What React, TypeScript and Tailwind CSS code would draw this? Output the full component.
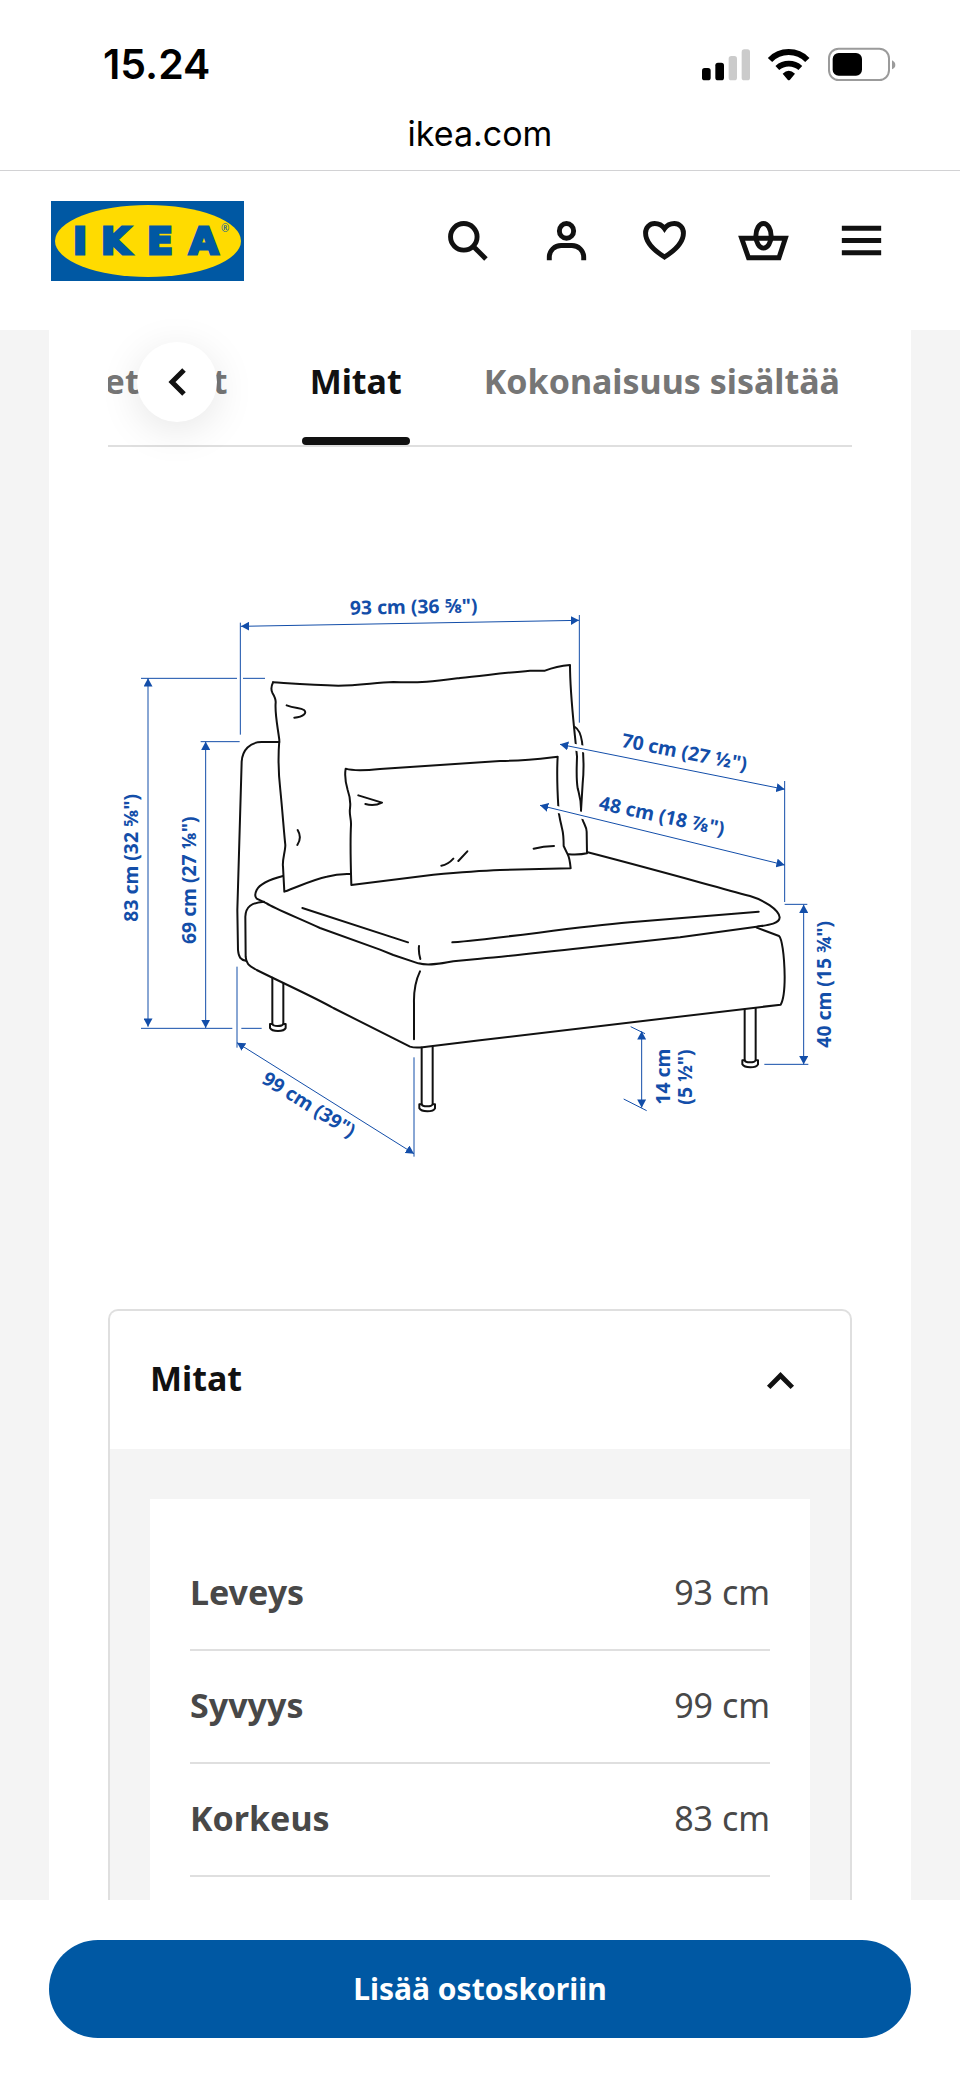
import type { ReactNode } from "react";

const dimensions = [
  { label: "Leveys", value: "93 cm" },
  { label: "Syvyys", value: "99 cm" },
  { label: "Korkeus", value: "83 cm" },
];

const tabs = [
  { label: "Tuotetiedot", active: false },
  { label: "Mitat", active: true },
  { label: "Kokonaisuus sisältää", active: false },
];

const Icon = ({ children }: { children: ReactNode }) => (
  <svg viewBox="0 0 24 24" className="block size-[59px]" fill="none" stroke="#111111" strokeWidth="2" aria-hidden="true">
    {children}
  </svg>
);

const StatusBar = () => {
  return (
    <div className="border-b border-[#d2d2d4] pt-10 pb-3 font-[Inter,sans-serif] text-black">
      <div className="flex h-12 items-center justify-between pr-16 pl-[103px]">
        <span className="text-[41px] leading-[48px] font-semibold">15.24</span>
        {/* signal, wifi and battery */}
        <svg viewBox="36 47 582 105" className="h-[35px] w-[194px]" role="img" aria-label="Signal, Wi-Fi, battery">
          <rect x="36" y="110" width="26" height="37" rx="8" />
          <rect x="76" y="94" width="26" height="53" rx="8" />
          <rect x="116" y="74" width="25" height="73" rx="8" fill="#cbcbcb" />
          <rect x="155" y="54" width="25" height="93" rx="8" fill="#cbcbcb" />
          <path d="M240 86A78 78 0 0 1 352 86" fill="none" stroke="#000" strokeWidth="18" />
          <path d="M262 110A52 52 0 0 1 331 110" fill="none" stroke="#000" strokeWidth="17" />
          <path d="M278 127Q296 110 315 127L300 145Q296 149 293 145Z" />
          <rect x="417" y="52" width="180" height="94" rx="29" fill="none" stroke="#9b9b9b" strokeWidth="6" />
          <rect x="428" y="65" width="88" height="68" rx="18" />
          <path d="M606 87Q616 92 616 101T606 114Z" fill="#9b9b9b" />
        </svg>
      </div>
      <p className="mt-[22px] text-center text-[34px] leading-[48px]">ikea.com</p>
    </div>
  );
};

const Header = () => {
  return (
    <header className="flex items-center justify-between bg-white pt-[30px] pr-[69px] pb-[49px] pl-[51px]">
      <a href="#" aria-label="IKEA">
        <svg viewBox="0 0 193 80" className="block h-20 w-[193px]">
          <rect width="193" height="80" fill="#0058a3" />
          <ellipse cx="97" cy="40" rx="93" ry="36" fill="#ffdb00" />
          <text
            x="22 50 96 138"
            y="53"
            fontSize="38"
            fontWeight="700"
            fill="#0058a3"
            stroke="#0058a3"
            strokeWidth="3"
            className="font-['DejaVu_Sans',sans-serif]"
          >
            IKEA
          </text>
          <text x="170" y="31" fontSize="10" fill="#0058a3" className="font-['Noto_Sans',sans-serif]">®</text>
        </svg>
      </a>
      <nav className="flex w-[453px] justify-between pb-0.5">
        <button type="button" aria-label="Haku">
          <Icon>
            <circle cx="10.5" cy="10.5" r="5.4" />
            <path d="M14.3 14.3l5.2 5.2" />
          </Icon>
        </button>
        <button type="button" aria-label="Profiili">
          <Icon>
            <ellipse cx="12" cy="8.1" rx="2.9" ry="3" />
            <path d="M5 20v-1.2a4.8 4.8 0 0 1 4.8-4.8h4.4a4.8 4.8 0 0 1 4.8 4.8V20" />
          </Icon>
        </button>
        <button type="button" aria-label="Suosikit">
          <Icon>
            <path d="M12 18.7C9 16.8 4.3 13 4.3 8.9 4.3 6.7 5.9 5.1 8 5.1c1.7 0 3.1.8 4 2.1.9-1.3 2.3-2.1 4-2.1 2.1 0 3.7 1.6 3.7 3.8 0 4.1-4.7 7.9-7.7 9.8z" />
          </Icon>
        </button>
        <button type="button" aria-label="Ostoskori">
          <Icon>
            <path d="M3.1 11.1h17.8L18.3 19H5.9z" />
            <ellipse cx="12" cy="10.1" rx="3.1" ry="5" />
          </Icon>
        </button>
        <button type="button" aria-label="Valikko">
          <Icon>
            <path d="M4 7h16M4 12h16M4 17h16" />
          </Icon>
        </button>
      </nav>
    </header>
  );
};

const Tabs = () => {
  return (
    <div className="relative">
      <div role="tablist" className="flex h-[117px] justify-end gap-[66px] overflow-hidden border-b-2 border-[#dfdfdf] pr-1">
        {tabs.map((tab) => (
          <button
            key={tab.label}
            type="button"
            role="tab"
            aria-selected={tab.active}
            className="flex shrink-0 flex-col justify-between pt-[29px]"
          >
            <span className={`px-2 text-[34px] leading-[44px] font-bold whitespace-nowrap ${tab.active ? "text-[#111111]" : "text-[#767676]"}`}>
              {tab.label}
            </span>
            {tab.active && <span className="h-2 w-full rounded-full bg-[#111111]"></span>}
          </button>
        ))}
      </div>
      <button
        type="button"
        aria-label="Edellinen"
        className="absolute top-3 left-[29px] flex size-20 items-center justify-center rounded-full bg-white shadow-[0_8px_40px_rgba(0,0,0,0.1)]"
      >
        <svg viewBox="0 0 18 28" className="h-7 w-[18px]" fill="none" stroke="#111111" strokeWidth="5" aria-hidden="true">
          <path d="M16 2L4 14l12 12" />
        </svg>
      </button>
    </div>
  );
};

const Leg = ({ x, left, right, bottom }: { x: number; left: number; right: number; bottom: number }) => (
  <g>
    <path d={`M${x} ${left}V${bottom}M${x + 33} ${right}V${bottom}`} />
    <path
      d={`M${x - 7} ${bottom - 1}v12q5 9 24 9t23-9v-12l-7 0q-3 6-17 6t-16-6z`}
      fill="#fff"
    />
  </g>
);

const arrowLines = [
  "M423 169L1437 151",
  "M144 325V1370",
  "M317 515V1374",
  "M411 1418L942 1751",
  "M1380 523L2054 658",
  "M1320 706L2054 885",
  "M2111 1004V1483",
  "M1625 1384V1613",
];

const measures = [
  { text: '93 cm (36 ⅝")', x: 750, y: 134, angle: -1 },
  { text: '83 cm (32 ⅝")', x: 115, y: 1055, angle: -90 },
  { text: '69 cm (27 ⅛")', x: 289, y: 1122, angle: -90 },
  { text: '99 cm (39")', x: 482, y: 1537, angle: 32 },
  { text: '70 cm (27 ½")', x: 1562, y: 530, angle: 11 },
  { text: '48 cm (18 ⅞")', x: 1494, y: 718, angle: 12 },
  { text: '40 cm (15 ¾")', x: 2192, y: 1433, angle: -90 },
  { text: "14 cm", x: 1709, y: 1604, angle: -90 },
  { text: '(5 ½")', x: 1777, y: 1604, angle: -90 },
];

const SofaDrawing = () => {
  return (
    <svg viewBox="24 -192 2232 2232" className="my-[59px] block w-full" role="img" aria-label="Mittapiirros">
      <defs>
        <marker
          id="arrow"
          viewBox="0 0 22 24"
          refX="22"
          refY="12"
          markerWidth="25"
          markerHeight="27"
          markerUnits="userSpaceOnUse"
          orient="auto-start-reverse"
        >
          <path d="M0 0L22 12L0 24Z" fill="#134ea9" />
        </marker>
      </defs>

      <g fill="none" stroke="#111111" strokeWidth="6" strokeLinecap="round" strokeLinejoin="round">
        {/* backrest frame */}
        <path d="M538 516H485C450 516 427 540 425 575L412 1020L414 1140C416 1162 422 1170 438 1172" />
        {/* big cushion */}
        <path d="M519 337C512 352 513 360 517 368C523 378 528 386 527 398C524 430 533 470 538 510C534 560 534 600 541 660C548 730 552 790 556 825C556 845 546 870 549 890L553 965C600 948 640 928 680 920C705 913 730 911 752 912" />
        <path d="M519 337C580 341 640 346 715 347C780 346 830 337 880 336C960 340 1010 333 1080 324C1150 317 1220 308 1290 302L1335 302C1360 292 1385 287 1410 285C1410 360 1418 430 1425 500L1431 560C1430 600 1428 625 1433 655C1438 675 1444 690 1443 722" />
        <path d="M1425 471C1437 478 1442 490 1446 515C1453 570 1452 600 1448 640L1443 722M1447 746C1450 760 1460 770 1460 785L1461 850C1445 854 1425 854 1406 853" />
        {/* small cushion */}
        <path d="M737 596C733 620 737 640 743 660C750 680 752 700 750 715C747 735 754 745 753 765C750 820 752 880 754 945L1000 914C1080 907 1150 902 1200 900L1412 895C1410 875 1408 862 1403 853L1391 828C1391 800 1390 790 1386 775C1380 745 1375 735 1375 710C1372 660 1370 610 1373 560C1330 565 1270 573 1200 573C1080 580 960 590 840 597C790 602 760 603 737 596Z" />
        {/* folds */}
        <path d="M560 406C585 416 600 413 612 420C622 428 612 440 583 443M775 676L846 698C830 706 815 708 796 702M593 780C602 795 602 810 592 825" />
        <path d="M1024 887Q1044 884 1060 866M1075 873L1102 844M1301 836Q1330 828 1362 828" />
        {/* seat */}
        <path d="M549 918C510 928 480 940 470 960C464 972 464 980 470 986L500 1000C520 1014 600 1046 660 1074L840 1139L880 1155L955 1180C985 1188 1020 1182 1060 1174L1140 1166C1240 1158 1340 1145 1440 1135L1740 1102L1970 1070C1995 1066 2038 1064 2039 1042C2036 1018 1990 990 1950 978C1780 932 1600 882 1463 847" />
        <path d="M607 1014L924 1117M1057 1117C1230 1102 1400 1074 1590 1057L1976 1025M957 1128Q955 1145 961 1167" />
        {/* base */}
        <path d="M492 995C455 998 437 1010 436 1040L437 1160C438 1180 445 1186 470 1200C550 1240 640 1280 700 1314L930 1430C950 1436 960 1432 980 1430L1140 1411L2042 1304C2050 1290 2054 1270 2054 1220C2053 1150 2045 1105 2037 1098L1970 1073" />
        <path d="M960 1204C945 1235 941 1260 942 1300V1408" />
        <Leg x={517} left={1223} right={1240} bottom={1363} />
        <Leg x={965} left={1433} right={1430} bottom={1604} />
        <Leg x={1934} left={1318} right={1314} bottom={1472} />
      </g>

      {/* gaps where the depth lines cross the outline */}
      <path d="M1395 526L1600 567M1345 712L1600 774" stroke="#fff" strokeWidth="20" />

      <g fill="none" stroke="#134ea9" strokeWidth="3">
        <path d="M421 158V494M1438 135V458M123 325H411M429 325H495M302 515H419M123 1375H397M424 1375H485" />
        <path d="M411 1190V1433M942 1462V1760M2054 633V996M2054 1003H2122M1993 1483H2125M1592 1370L1635 1391M1571 1587L1640 1622" />
        {arrowLines.map((d) => (
          <path key={d} d={d} markerStart="url(#arrow)" markerEnd="url(#arrow)" />
        ))}
      </g>

      <g fill="#134ea9" fontSize="58" fontWeight="700" className="font-['Noto_Sans',sans-serif]">
        {measures.map((m) => (
          <text key={m.text} transform={`translate(${m.x} ${m.y}) rotate(${m.angle})`}>
            {m.text}
          </text>
        ))}
      </g>
    </svg>
  );
};

const Accordion = () => {
  return (
    <section className="flex flex-1 flex-col rounded-t-[10px] border-2 border-b-0 border-[#dfdfdf]">
      <h2>
        <button type="button" aria-expanded="true" className="flex h-[138px] w-full items-center justify-between px-10 text-[34px] leading-[44px] font-bold text-[#111111]">
          <span className="pb-1">Mitat</span>
          <Icon>
            <path d="M7.2 14.8L12 10l4.8 4.8" />
          </Icon>
        </button>
      </h2>
      <div className="flex flex-1 flex-col bg-[#f4f4f4] px-10 pt-[50px]">
        <div className="flex-1 bg-white px-10 pt-[39px] pb-[23px]">
          <table className="w-full text-[34px] leading-[44px] text-[#484848]">
            <tbody>
              {dimensions.map((row) => (
                <tr key={row.label} className="border-b-2 border-[#dfdfdf]">
                  <th scope="row" className="pt-8 pb-[35px] text-left font-bold">{row.label}</th>
                  <td className="pt-8 pb-[35px] text-right">{row.value}</td>
                </tr>
              ))}
            </tbody>
          </table>
        </div>
      </div>
    </section>
  );
};

export default function App() {
  return (
    <div className="flex min-h-screen flex-col bg-white font-['Noto_Sans',sans-serif]">
      <StatusBar />
      <Header />
      <div className="flex flex-1 flex-col bg-[#f4f4f4] px-[49px]">
        <main className="flex flex-1 flex-col bg-white px-[59px]">
          <Tabs />
          <SofaDrawing />
          <Accordion />
        </main>
      </div>
      {/* add to cart */}
      <footer className="bg-white px-[49px] py-10">
        <button type="button" className="h-[98px] w-full rounded-full bg-[#0058a3] text-[30px] leading-[40px] font-bold text-white">
          Lisää ostoskoriin
        </button>
      </footer>
    </div>
  );
}
